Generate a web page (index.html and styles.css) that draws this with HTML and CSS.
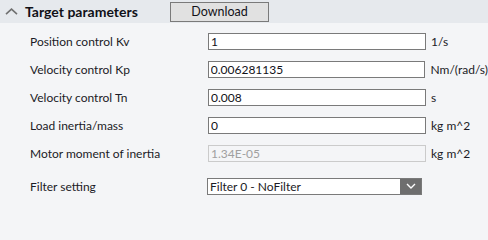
FILE: index.html
```html
<!DOCTYPE html>
<html>
<head>
<meta charset="utf-8">
<link rel="stylesheet" href="styles.css">
</head>
<body>
<div class="panel">
  <div class="header">
    <svg class="chev" width="13" height="7" viewBox="0 0 13 7"><path d="M1 6.2 L6.5 1.2 L12 6.2" fill="none" stroke="#707070" stroke-width="1.6"/></svg>
    <span class="title">Target parameters</span>
    <button class="download">Download</button>
  </div>
  <div class="form">
    <div class="row"><span class="label">Position control Kv</span><input class="field" value="1"><span class="unit">1/s</span></div>
    <div class="row"><span class="label">Velocity control Kp</span><input class="field" value="0.006281135"><span class="unit">Nm/(rad/s)</span></div>
    <div class="row"><span class="label">Velocity control Tn</span><input class="field" value="0.008"><span class="unit">s</span></div>
    <div class="row"><span class="label">Load inertia/mass</span><input class="field" value="0"><span class="unit">kg m^2</span></div>
    <div class="row"><span class="label">Motor moment of inertia</span><input class="field disabled" value="1.34E-05" disabled><span class="unit">kg m^2</span></div>
    <div class="row select-row"><span class="label">Filter setting</span>
      <div class="select"><span class="select-text">Filter 0 - NoFilter</span><span class="select-btn"><svg width="10" height="6" viewBox="0 0 10 6"><path d="M1 1 L5 5 L9 1" fill="none" stroke="#ffffff" stroke-width="1.4"/></svg></span></div>
    </div>
  </div>
</div>
</body>
</html>
```
FILE: styles.css
```css
html, body {
  margin: 0;
  padding: 0;
  background: #f4f5f7;
}
body {
  font-family: "Lato", "Noto Sans", sans-serif;
  color: #1b1b26;
  width: 488px;
  height: 201px;
  overflow: hidden;
}
.header {
  height: 23px;
  background: #e6e9ed;
  display: flex;
  align-items: center;
}
.chev {
  margin-left: 5px;
  margin-top: -1px;
}
.title {
  margin-left: 7px;
  font-size: 14px;
  font-weight: 700;
  color: #111118;
  width: 145px;
}
.download {
  height: 20px;
  width: 99px;
  margin-top: 1px;
  border: 1px solid #7a7a7a;
  background: #e1e1e1;
  font-family: inherit;
  font-size: 12.5px;
  color: #111118;
  padding: 0;
  line-height: 18px;
}
.form {
  padding-top: 4px;
  padding-left: 30px;
}
.row {
  height: 28px;
  display: flex;
  align-items: center;
}
.label {
  width: 178px;
  font-size: 12px;
}
.field {
  box-sizing: border-box;
  width: 218px;
  height: 17px;
  border: 1px solid #7a7a7a;
  background: #ffffff;
  font-family: inherit;
  font-size: 12px;
  color: #111118;
  padding: 0 2px;
  margin: 0;
  outline: none;
}
.field.disabled {
  border-color: #cbcbcb;
  background: #f4f5f7;
  color: #a0a0a0;
}
.unit {
  margin-left: 5px;
  font-size: 12px;
}
.select-row {
  margin-top: 5px;
}
.select {
  box-sizing: border-box;
  width: 215px;
  height: 17px;
  margin-left: -1px;
  border: 1px solid #7a7a7a;
  background: #ffffff;
  display: flex;
  align-items: center;
}
.select-text {
  flex: 1;
  font-size: 12px;
  padding-left: 2px;
}
.select-btn {
  width: 21px;
  height: 15px;
  background: #6e6e6e;
  display: flex;
  align-items: center;
  justify-content: center;
}
```
